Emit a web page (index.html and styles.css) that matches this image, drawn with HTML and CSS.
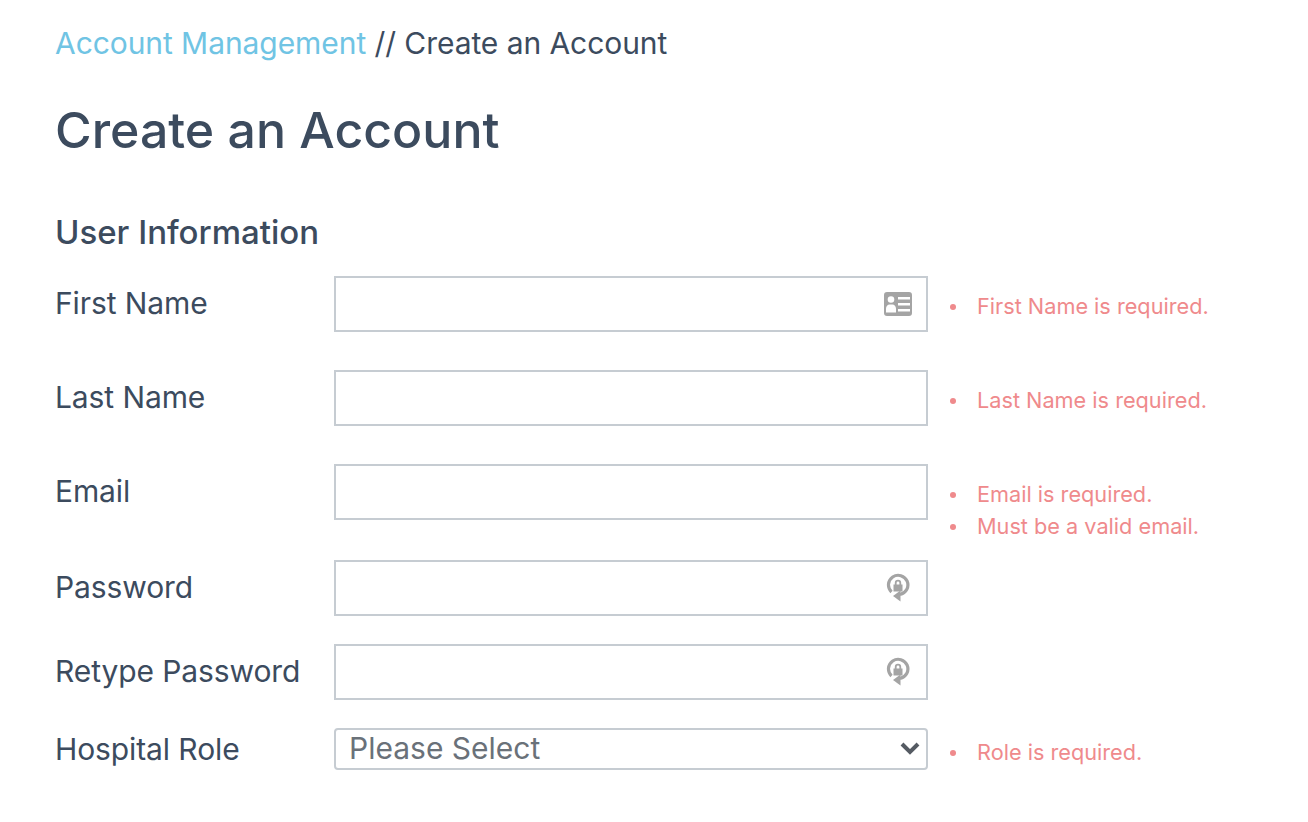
FILE: index.html
```html
<!DOCTYPE html>
<html lang="en">
<head>
    <meta charset="UTF-8">
    <meta name="viewport" content="width=device-width, initial-scale=1.0">
    <title>Create an Account</title>
    <link rel="stylesheet" href="styles.css">
</head>
<body>
    <div class="container">
        <div class="breadcrumb"><a href="#">Account Management</a> // Create an Account</div>
        <h1>Create an Account</h1>
        <h2>User Information</h2>
        <form>
            <div class="row has-error">
                <label for="firstName">First Name</label>
                <div class="field">
                    <input type="text" id="firstName">
                    <svg class="icon" width="28" height="24" viewBox="0 0 28 24">
                        <path fill="#a4a4a4" fill-rule="evenodd" d="M3 0h22a3 3 0 0 1 3 3v18a3 3 0 0 1-3 3H3a3 3 0 0 1-3-3V3a3 3 0 0 1 3-3zM7 4.200a3.300 3.300 0 1 0 0 6.600a3.300 3.300 0 0 0 0-6.600zM2 20.500h10v-3.700c0-2.500-1.700-4.300-3.500-4.300h-3C3.700 12.500 2 14.300 2 16.800zM14 5v2.500h12V5zM14 11v2.500h12V11zM14 17v2.500h12V17z"/>
                    </svg>
                </div>
                <ul class="errors">
                    <li>First Name is required.</li>
                </ul>
            </div>
            <div class="row has-error">
                <label for="lastName">Last Name</label>
                <div class="field"><input type="text" id="lastName"></div>
                <ul class="errors">
                    <li>Last Name is required.</li>
                </ul>
            </div>
            <div class="row has-error email-row">
                <label for="email">Email</label>
                <div class="field"><input type="text" id="email"></div>
                <ul class="errors">
                    <li>Email is required.</li>
                    <li>Must be a valid email.</li>
                </ul>
            </div>
            <div class="row">
                <label for="password">Password</label>
                <div class="field">
                    <input type="password" id="password">
                    <svg class="icon icon-lock" width="24" height="30" viewBox="0 0 24 30">
                        <path fill="none" stroke="#a4a4a4" stroke-width="3.200" d="M5.500 19A9.700 9.700 0 1 1 14 21.500"/>
                        <path fill="#a4a4a4" d="M14.500 17.500v11l-7.500-5.500z"/>
                        <path fill="#a4a4a4" fill-rule="evenodd" d="M7.500 11.500h1.300V10a3.200 3.200 0 0 1 6.400 0v1.500h1.300v7H7.500zM10.600 11.500h2.800V10a1.400 1.400 0 0 0-2.800 0z"/>
                    </svg>
                </div>
            </div>
            <div class="row">
                <label for="retypePassword">Retype Password</label>
                <div class="field">
                    <input type="password" id="retypePassword">
                    <svg class="icon icon-lock" width="24" height="30" viewBox="0 0 24 30">
                        <path fill="none" stroke="#a4a4a4" stroke-width="3.200" d="M5.500 19A9.700 9.700 0 1 1 14 21.500"/>
                        <path fill="#a4a4a4" d="M14.500 17.500v11l-7.500-5.500z"/>
                        <path fill="#a4a4a4" fill-rule="evenodd" d="M7.500 11.500h1.300V10a3.200 3.200 0 0 1 6.400 0v1.500h1.300v7H7.500zM10.600 11.500h2.800V10a1.400 1.400 0 0 0-2.800 0z"/>
                    </svg>
                </div>
            </div>
            <div class="row has-error role-row">
                <label for="role">Hospital Role</label>
                <div class="field">
                    <select id="role">
                        <option>Please Select</option>
                    </select>
                    <svg class="icon icon-chevron" width="20" height="14" viewBox="0 0 20 14">
                        <path fill="none" stroke="#555b63" stroke-width="4" d="M2 3l8 8l8-8"/>
                    </svg>
                </div>
                <ul class="errors">
                    <li>Role is required.</li>
                </ul>
            </div>
        </form>
    </div>
</body>
</html>
```

FILE: styles.css
```css
body {
    margin: 0;
    font-family: Inter, Lato, sans-serif;
    background: #fff;
    color: #3c4b5e;
}
.container {
    padding: 24px 0 0 55px;
}
.breadcrumb {
    font-size: 30px;
    line-height: 39px;
    letter-spacing: -0.07px;
}
.breadcrumb a {
    color: #70c4e4;
    text-decoration: none;
}
h1 {
    margin: 37px 0 0;
    font-size: 50px;
    line-height: 60px;
    font-weight: 500;
}
h2 {
    margin: 50px 0 0;
    font-size: 33px;
    line-height: 44px;
    font-weight: 450;
}
form {
    margin-top: 22px;
}
.row {
    display: flex;
    align-items: flex-start;
    height: 56px;
    margin-bottom: 28px;
}
.row.has-error {
    margin-bottom: 38px;
}
.row.email-row {
    margin-bottom: 40px;
}
.row.role-row {
    height: 42px;
}
label {
    width: 279px;
    flex-shrink: 0;
    font-size: 30px;
    line-height: 54px;
    letter-spacing: -0.1px;
}
.role-row label {
    line-height: 42px;
}
.field {
    position: relative;
    width: 594px;
    flex-shrink: 0;
}
input {
    display: block;
    box-sizing: border-box;
    width: 100%;
    height: 56px;
    border: 2px solid #c6ccd2;
    background: #fff;
}
select {
    display: block;
    box-sizing: border-box;
    width: 100%;
    height: 42px;
    padding: 0 13px 4px;
    border: 2px solid #c6ccd2;
    border-radius: 4px;
    background: #fff;
    color: #6a7179;
    font-family: inherit;
    font-size: 30px;
    appearance: none;
}
.icon {
    position: absolute;
    top: 16px;
    right: 16px;
}
.icon-lock {
    top: 13px;
    right: 18px;
}
.icon-chevron {
    top: 13px;
    right: 8px;
}
.errors {
    margin: 15px 0 0;
    padding: 0 0 0 22px;
    list-style: none;
    color: #ef8a8c;
    font-size: 21.700px;
    line-height: 31.500px;
}
.role-row .errors {
    margin-top: 9px;
}
.errors li {
    position: relative;
    padding-left: 27px;
}
.errors li::before {
    content: "";
    position: absolute;
    left: 0;
    top: 13px;
    width: 6px;
    height: 6px;
    border-radius: 50%;
    background: #ef8a8c;
}
```
